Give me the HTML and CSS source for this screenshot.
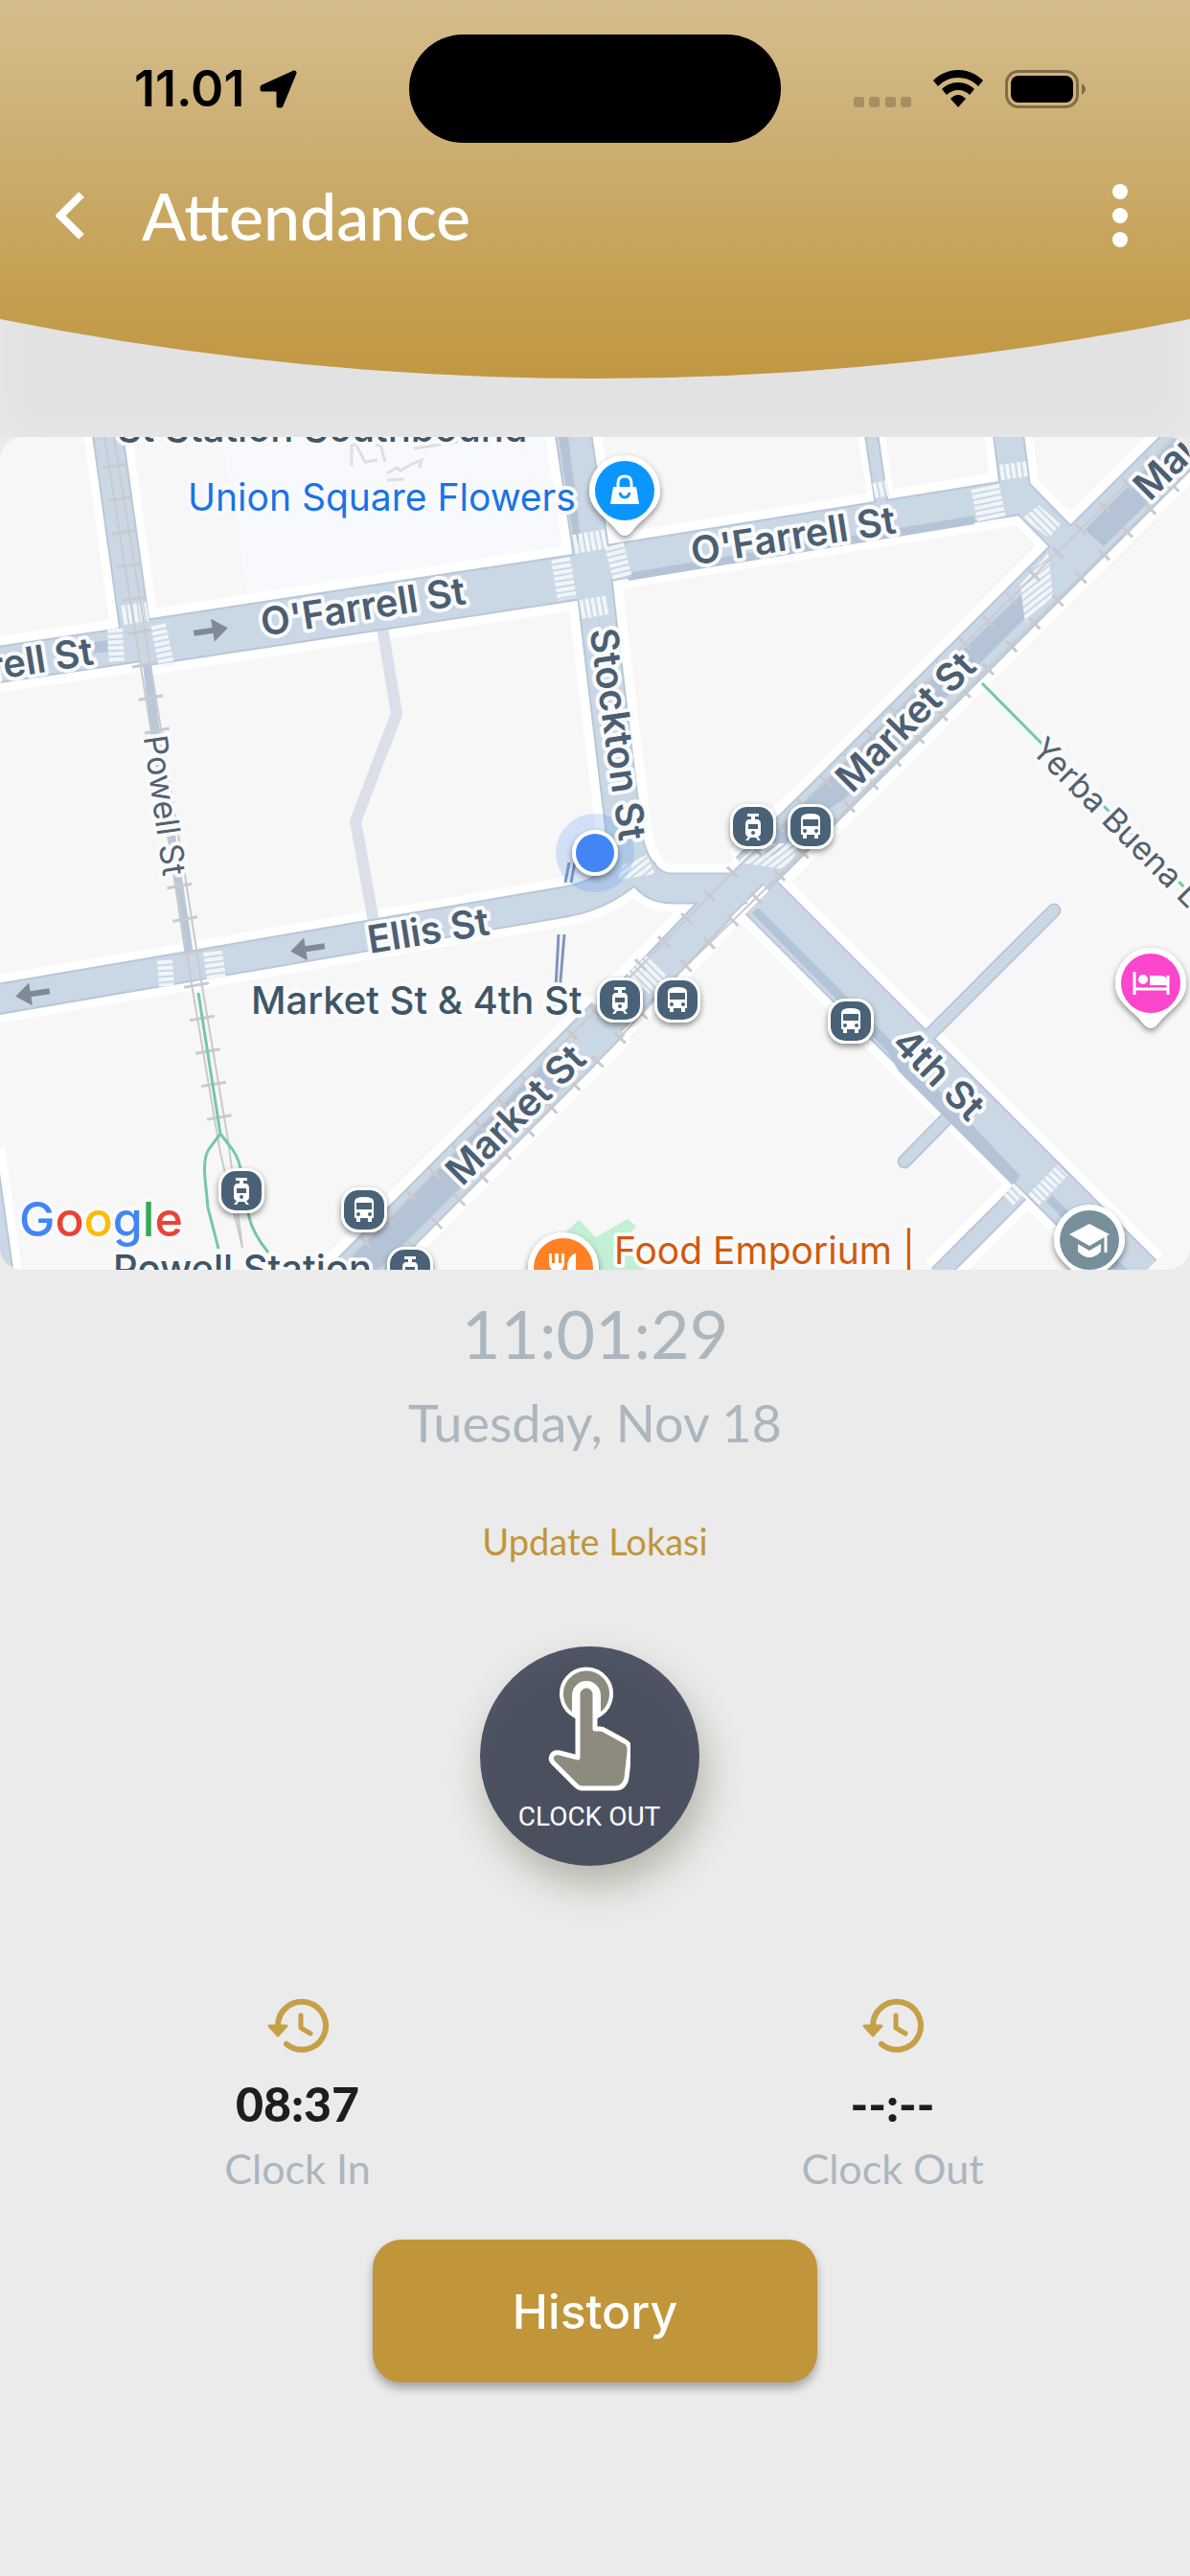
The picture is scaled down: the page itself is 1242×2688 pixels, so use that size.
FILE: index.html
```html
<!DOCTYPE html>
<html lang="en">
<head>
<meta charset="utf-8">
<meta name="viewport" content="width=device-width, initial-scale=1">
<title>Attendance</title>
<link rel="stylesheet" href="styles.css">
</head>
<body>
<div class="screen">
  <header class="header">
    <svg class="header-curve" viewBox="0 0 1242 395" preserveAspectRatio="none" aria-hidden="true">
      <defs>
        <linearGradient id="gold" x1="0" y1="0" x2="0" y2="1">
          <stop offset="0" stop-color="#d4bd8d"/>
          <stop offset=".33" stop-color="#cdb075"/>
          <stop offset=".7" stop-color="#c6a256"/>
          <stop offset="1" stop-color="#c19742"/>
        </linearGradient>
      </defs>
      <path d="M0 0H1242V333Q621 457 0 333Z" fill="url(#gold)"/>
    </svg>
    <div class="status">
      <div class="status-left">
        <span class="status-time">11.01</span>
        <svg width="40" height="40" viewBox="0 0 40 40" aria-hidden="true"><path d="M36 3 3 18V20H20V37H22Z" stroke="#000" stroke-width="5" stroke-linejoin="round"/></svg>
      </div>
      <div class="island"></div>
      <div class="status-right">
        <svg class="signal" width="60" height="11" viewBox="0 0 60 11" aria-hidden="true"><g fill="#a68f62"><rect width="11" height="11" rx="3"/><rect x="16" width="11" height="11" rx="3"/><rect x="33" width="11" height="11" rx="3"/><rect x="49" width="11" height="11" rx="3"/></g></svg>
        <svg width="52" height="39" viewBox="0 0 52 39" aria-hidden="true"><path d="M26 0C16 0 7 4 0 11L5 17C11 11 18 8 26 8S41 11 47 17L52 11C45 4 36 0 26 0ZM26 13C19 13 13 16 9 20L14 26C17 23 21 21 26 21S35 23 38 26L43 20C39 16 33 13 26 13ZM26 26C23 26 20 28 18 30L26 39 34 30C32 28 29 26 26 26Z"/></svg>
        <svg width="85" height="40" viewBox="0 0 85 40" aria-hidden="true"><rect width="77" height="40" rx="14" fill="#806d48"/><rect x="3" y="3" width="71" height="34" rx="11" fill="#d0b47e"/><rect x="6" y="6" width="65" height="28" rx="8"/><path d="M80 14Q88 20 80 26Z" fill="#806d48"/></svg>
      </div>
    </div>
    <div class="titlebar">
      <button class="icon-button" type="button" aria-label="Back"><svg width="32" height="50" viewBox="0 0 32 50"><path d="M27 3 5 25 27 47" fill="none" stroke="#fff" stroke-width="8"/></svg></button>
      <h1 class="title">Attendance</h1>
      <button class="icon-button" type="button" aria-label="More options"><svg width="18" height="68" viewBox="0 0 18 68"><g fill="#fff"><circle cx="9" cy="9" r="8"/><circle cx="9" cy="34" r="8"/><circle cx="9" cy="59" r="8"/></g></svg></button>
    </div>
  </header>

  <svg class="map" viewBox="0 456 1242 869" role="img" aria-label="Map of your location near Market St and 4th St">
    <defs>
      <g id="r48"><path d="M143 672 616 600M1270 430 1120 579 860 838 785 912M635 1063 350 1349M795 937 1190 1332"/></g>
      <g id="r38"><path d="M-5 694 143 672M613 591 1060 519M598 450 616 570 625 650 652 875Q657 900 670 915M750 945 690 1008 630 1068"/></g>
      <g id="r32"><path d="M112 450 143 672M1052 450 1060 512 1112 565M-5 1043 200 1008 590 941Q635 933 668 898M668 905Q678 927 702 927H780M-20 1200-1 1335M720 977 800 897"/></g>
      <g id="r20"><path d="M979 1330 1064 1245"/></g>
      <g id="r13"><path d="M909 450 920 525"/></g>
      <g id="alleys"><path d="M1100 950 965 1085M944 1212 1000 1155"/></g>
      <pattern id="stripes" width="6" height="6" patternUnits="userSpaceOnUse" patternTransform="rotate(-38)"><path d="M0 2H6" stroke="#f1f5fa" stroke-width="4"/></pattern>
      <pattern id="stripes-down" width="6" height="6" patternUnits="userSpaceOnUse" patternTransform="rotate(45)"><path d="M0 2H6" stroke="#f1f5fa" stroke-width="4"/></pattern>
      <g id="badge"><rect x="-24" y="-23" width="48" height="47" rx="18" fill="#fff" filter="url(#shadow)"/><rect x="-21" y="-20" width="42" height="41" rx="15" fill="#4a6277"/></g>
      <g id="tram"><use href="#badge"/><path d="M-6-13H6V-10H2V-7H5Q8-6 8-2V7Q8 10 5 11L8 15H5L3 12H-3L-5 15H-8L-5 11Q-8 10-8 7V-2Q-8-6-5-7H-2V-10H-6Z" fill="#fff"/><path d="M-5-2H5V3H-5Z" fill="#4a6277"/><circle cy="7" r="2" fill="#4a6277"/></g>
      <g id="bus"><use href="#badge"/><path d="M-10-8Q-10-13 0-13T10-8V9H8V13H4V9H-4V13H-8V9H-10Z" fill="#fff"/><path d="M-8-7H8V0H-8Z" fill="#4a6277"/><circle cx="-6" cy="5" r="2" fill="#4a6277"/><circle cx="6" cy="5" r="2" fill="#4a6277"/></g>
      <path id="pin" d="M0-37A37 37 0 0 1 37 0C37 20 19 27 6 44Q0 50-6 44C-19 27-37 20-37 0A37 37 0 0 1 0-37Z" fill="#fff" filter="url(#shadow)"/>
      <path id="arrow" d="M-18-3H2V-12L18 0 2 12V3H-18Z" fill="#7f8a96"/>
      <filter id="shadow" x="-30%" y="-30%" width="160%" height="170%"><feDropShadow dx="0" dy="3" stdDeviation="3" flood-opacity=".45"/></filter>
    </defs>

    <rect y="456" width="1242" height="869" fill="#f7f7f7"/>
    <path d="M232 456H575L592 575 260 625Z" fill="#f8f9fc"/>
    <path d="M588 1288 604 1273 622 1291 655 1272 664 1280 650 1294 674 1325H588Z" fill="#c3efd5"/>

    <g class="roads">
      <g stroke="#fff"><use href="#r48" stroke-width="68"/><use href="#r38" stroke-width="58"/><use href="#r32" stroke-width="50"/><use href="#r20" stroke-width="38"/><use href="#r13" stroke-width="28"/></g>
      <path d="M399 655 414 745 371 857 377 890 390 962" stroke="#dbdfe8" stroke-width="12"/>
      <g stroke="#b9c7d8"><use href="#r48" stroke-width="49"/><use href="#r38" stroke-width="39"/><use href="#r32" stroke-width="33"/><use href="#r20" stroke-width="20"/><use href="#r13" stroke-width="15"/><use href="#alleys" stroke-width="15" stroke-linecap="round"/><path d="M153 690 163 770 185 913 198 1000" stroke-width="9"/></g>
      <g stroke="#cad8e5"><use href="#r48" stroke-width="45"/><use href="#r38" stroke-width="35"/><use href="#r32" stroke-width="29"/><use href="#r20" stroke-width="16"/><use href="#r13" stroke-width="11"/><use href="#alleys" stroke-width="11" stroke-linecap="round"/></g>
    </g>

    <g fill="#b4c4d6">
      <path d="M1132 553 1152 570 1242 482V456H1228ZM1066 620 1069 646 880 835 838 861 808 894 790 885 850 825ZM582 1096 612 1108 395 1325H352ZM785 953 791 947 938 1094 948 1104 1065 1227 1057 1237 938 1118 926 1097ZM1092 1254 1098 1247 1177 1325H1163ZM654 598 1017 538V547L656 606ZM583 456H593L606 560 600 572ZM98 670 112 668V680L98 682Z"/>
    </g>

    <g class="crossings">
      <path d="M120 656 122 692M165 652 174 695" stroke-width="16"/>
      <path d="M128 642 154 638M599 568 633 562M606 636 635 631" stroke-width="20"/>
      <path d="M585 583 592 625M641 569 650 604" stroke-width="20"/>
      <path d="M912 512 927 509M1044 493 1073 489M172 1002 174 1029" stroke-width="16"/>
      <path d="M1028 508 1035 542" stroke-width="30"/>
      <path d="M222 993 226 1022" stroke-width="20"/>
      <path d="M1079 1252 1109 1221M1052 1252 1064 1240" stroke-width="16"/>
    </g>
    <path d="M1065 610 1094 577 1099 622 1070 650ZM770 900 790 880 838 880 819 907ZM645 918 650 903 675 892 684 912Z" fill="url(#stripes)"/>
    <path d="M653 1017 675 997 696 1017 678 1037ZM1067 541 1084 527 1107 547 1095 561Z" fill="url(#stripes-down)"/>

    <g class="rails">
      <path d="M109 456 146 690 182 913 200 1027 230 1203 253 1302M119 456 158 700 193 913 210 1023 238 1190 253 1302M1250 432 1132 548 1007 672 760 915 667 1010 590 1086 360 1318M1250 482 1074 654 860 868 712 1012 620 1112 410 1322"/>
      <path class="ties" d="M114 450 150 690 165 768"/>
      <path class="ties" d="M187 923 234 1196"/>
      <path class="ties-small" d="M1250 432 1007 672 760 915 590 1086 360 1318M1250 482 860 868 712 1012 620 1112 410 1322"/>
      <path d="M367 486 367 465 371 463 381 482 394 480M392 465 397 464 402 482M404 494 414 488 418 491 430 484 440 480 438 488M404 501 422 500M432 468 478 461" stroke="#dddfe1" stroke-width="3"/>
    </g>
    <g class="paths">
      <path d="M207 1036 230 1183 218 1199Q212 1208 214 1230L217 1260 228 1303M230 1183 243 1200Q250 1210 252 1225L259 1263Q260 1282 280 1307M1025 713 1140 829 1242 932"/>
      <path d="M583 975 579 1050M589 975 584 1035M594 900 590 921M600 900 596 921" stroke="#8094c0"/>
    </g>
    <use href="#arrow" transform="translate(220 658) rotate(-9)"/>
    <use href="#arrow" transform="translate(321 990) rotate(171)"/>
    <use href="#arrow" transform="translate(34 1037) rotate(171)"/>

    <circle cx="621" cy="890" r="41" fill="#4285f4" fill-opacity=".2"/>

    <g class="labels">
      <text class="place" x="122" y="461">St Station Southbound</text>
      <text class="shop" x="196" y="533">Union Square Flowers</text>
      <text class="street" text-anchor="middle" transform="translate(381 647) rotate(-9)">O'Farrell St</text>
      <text class="street" text-anchor="middle" transform="translate(830 573) rotate(-9)">O'Farrell St</text>
      <text class="street" text-anchor="end" transform="translate(99 693) rotate(-9)">O'Farrell St</text>
      <text class="street" text-anchor="middle" transform="translate(449 985) rotate(-9)">Ellis St</text>
      <text class="street" text-anchor="middle" transform="translate(631 768) rotate(82)">Stockton St</text>
      <text class="street" text-anchor="middle" transform="translate(955 763) rotate(-45)">Market St</text>
      <text class="street" text-anchor="middle" transform="translate(548 1173) rotate(-45)">Market St</text>
      <text class="street" transform="translate(1200 524) rotate(-45)">Market St</text>
      <text class="street" text-anchor="middle" transform="translate(970 1131) rotate(45)">4th St</text>
      <text class="lane" text-anchor="middle" transform="translate(160 842) rotate(82)">Powell St</text>
      <text class="lane" transform="translate(1075 784) rotate(45)">Yerba Buena Ln</text>
      <text class="place" x="262" y="1058">Market St &amp; 4th St</text>
      <text class="place" x="118" y="1338">Powell Station</text>
      <text class="shop food" x="641" y="1319">Food Emporium |</text>
      <text class="google" x="20" y="1290"><tspan fill="#4285f4">G</tspan><tspan fill="#ea4335">o</tspan><tspan fill="#fbbc04">o</tspan><tspan fill="#4285f4">g</tspan><tspan fill="#34a853">l</tspan><tspan fill="#ea4335">e</tspan></text>
    </g>

    <circle cx="621" cy="890" r="24" fill="#fff" filter="url(#shadow)"/>
    <circle cx="621" cy="890" r="20" fill="#4285f4"/>

    <use href="#tram" x="786" y="862"/><use href="#bus" x="846" y="862"/>
    <use href="#tram" x="647" y="1043"/><use href="#bus" x="707" y="1043"/>
    <use href="#bus" x="888" y="1065"/><use href="#tram" x="252" y="1242"/>
    <use href="#bus" x="380" y="1262"/><use href="#tram" x="428" y="1324"/>

    <g transform="translate(652 512)"><use href="#pin"/><circle r="31" fill="#0b96ff"/><path d="M-12-4H12L15 14H-15Z" fill="#fff"/><path d="M-7-3V-8Q-7-15 0-15T7-8V-3" fill="none" stroke="#fff" stroke-width="3"/><path d="M-5 2Q-4 7 0 7T5 2" fill="none" stroke="#0b96ff" stroke-width="3"/></g>
    <g transform="translate(1201 1026)"><use href="#pin"/><circle r="31" fill="#fa46cc"/><path d="M-17-12V12M-17 6H18M18-8V12" stroke="#fff" stroke-width="3" fill="none"/><circle cx="-8" cy="-4" r="5" fill="#fff"/><path d="M-1 2V-8H10Q18-8 18 0V2Z" fill="#fff"/></g>
    <g transform="translate(1137 1294)"><use href="#pin"/><circle r="31" fill="#768f9a"/><path d="M0-17 21-6 0 6-21-6Z" fill="#fff"/><path d="M-12 4 0 11 12 4V12Q6 18 0 18T-12 12Z" fill="#fff"/><path d="M17-7V13" stroke="#fff" stroke-width="3"/></g>
    <g transform="translate(588 1323)"><use href="#pin"/><circle r="31" fill="#ff8126"/><path d="M-15-15V-6Q-15 2-9 3V16H-5V3Q1 2 1-6V-15H-2V-5H-5V-15H-9V-5H-12V-15ZM12-15Q4-12 4 0V4H9V16H13V-15Z" fill="#fff"/></g>
  </svg>

  <main class="content">
    <time class="clock">11:01:29</time>
    <p class="date">Tuesday, Nov 18</p>
    <button class="update" type="button">Update Lokasi</button>
    <button class="punch" type="button">
      <svg width="86" height="132" viewBox="0 0 86 132" aria-hidden="true">
        <g fill="#8d8b7d" stroke="#fff" stroke-width="5" stroke-linejoin="round">
          <path d="M27 52A26 26 0 1 1 53 52V31A13 13 0 0 0 27 31Z" stroke-linejoin="miter" stroke-width="4"/>
          <path d="M31 96V30A9 9 0 0 1 49 30V66H54Q57 66 60 68L80 79Q86 82 85 90L82 117Q80 128 70 128H35Q32 128 28 124L5 101Q2 98 4 94 6 90 12 91Z"/>
        </g>
      </svg>
      <span>CLOCK OUT</span>
    </button>

    <dl class="stats">
      <div class="stat">
        <svg width="64" height="58" viewBox="0 0 64 58" aria-hidden="true"><g fill="none" stroke="#c5a047" stroke-linecap="round"><path d="M11 29A25 25 0 1 1 20 48" stroke-width="6"/><path d="M35 18V31L45 37" stroke-width="5" stroke-linejoin="round"/></g><path d="M2 29H20L11 39Z" fill="#c5a047" stroke="#c5a047" stroke-width="3" stroke-linejoin="round"/></svg>
        <dd>08:37</dd>
        <dt>Clock In</dt>
      </div>
      <div class="stat">
        <svg width="64" height="58" viewBox="0 0 64 58" aria-hidden="true"><g fill="none" stroke="#c5a047" stroke-linecap="round"><path d="M11 29A25 25 0 1 1 20 48" stroke-width="6"/><path d="M35 18V31L45 37" stroke-width="5" stroke-linejoin="round"/></g><path d="M2 29H20L11 39Z" fill="#c5a047" stroke="#c5a047" stroke-width="3" stroke-linejoin="round"/></svg>
        <dd>--:--</dd>
        <dt>Clock Out</dt>
      </div>
    </dl>

    <button class="history" type="button">History</button>
  </main>
</div>
</body>
</html>
```
FILE: styles.css
```css
* { box-sizing: border-box; }

body {
  margin: 0;
  background: #ebebeb;
  font-family: Lato, "Open Sans", sans-serif;
}

button {
  padding: 0;
  border: 0;
  background: none;
  font: inherit;
  cursor: pointer;
}

svg { display: block; }

.screen {
  display: flex;
  flex-direction: column;
  min-height: 100vh;
}

/* Header */
.header {
  position: relative;
  min-height: 456px;
  padding-top: 36px;
  background: #e2e2e2;
  box-shadow: inset 0 0 36px #e9e9e9;
}

.header-curve {
  position: absolute;
  inset: 0 0 auto;
  width: 100%;
  height: 395px;
}

.status,
.titlebar {
  position: relative;
  display: grid;
  align-items: center;
}

.status { grid-template-columns: 1fr 388px 1fr; }

.island {
  height: 113px;
  border-radius: 57px;
  background: #000;
}

.status-left,
.status-right {
  display: flex;
  align-items: center;
}

.status-left {
  gap: 16px;
  padding-left: 140px;
}

.status-time {
  font: 600 52px/60px Inter, sans-serif;
}

.status-right {
  justify-content: flex-end;
  gap: 23px;
  padding-right: 108px;
}

.signal { margin-top: 28px; }

.titlebar {
  grid-template-columns: 32px 1fr auto;
  gap: 58px;
  height: 152px;
  padding: 0 64px 0 58px;
}

.title {
  margin: 0;
  color: #fff;
  font-size: 68px;
  font-weight: 500;
  line-height: 80px;
}

/* Map */
.map {
  width: 100%;
  border-radius: 24px;
}

.roads,
.crossings,
.rails,
.paths { fill: none; }

.crossings {
  stroke: #f1f5fa;
  stroke-dasharray: 4 2;
}

.rails {
  stroke: #c9cace;
  stroke-width: 2;
}

.ties {
  stroke-width: 26;
  stroke-dasharray: 3 32;
}

.ties-small {
  stroke-width: 16;
  stroke-dasharray: 3 31;
}

.paths {
  stroke: #76c7a6;
  stroke-width: 3;
}

.labels {
  font-family: Inter, sans-serif;
  font-size: 40px;
  paint-order: stroke;
  stroke: #f9fafc;
  stroke-width: 8px;
  stroke-linejoin: round;
}

.street {
  fill: #4c5f72;
  font-weight: 600;
}

.lane {
  fill: #53616f;
  font-size: 34px;
}

.place {
  fill: #3f5668;
  font-weight: 500;
}

.shop {
  fill: #1a73e8;
  font-size: 39px;
}

.food { fill: #d4590a; }

.google {
  font-size: 50px;
  font-weight: 500;
}

/* Clock */
.content {
  display: flex;
  flex-direction: column;
  align-items: center;
  padding: 26px 0 64px;
}

.clock,
.date,
.stat dt { color: #abb6bf; }

.clock {
  font-size: 70px;
  line-height: 80px;
}

.date {
  margin: 18px 0 0;
  font-size: 54px;
  line-height: 72px;
}

.update {
  margin-top: 63px;
  color: #c19539;
  font-size: 38px;
  line-height: 48px;
}

.punch {
  display: flex;
  flex-direction: column;
  align-items: center;
  width: 229px;
  height: 229px;
  margin: 86px 12px 0 0;
  padding-top: 20px;
  border-radius: 50%;
  background: radial-gradient(circle at 50% 60%, #4b505f 0 55%, #555c6d 100%);
  box-shadow: 6px 20px 40px #b3b4a8;
  color: #fff;
  font: 400 28px/32px Roboto, sans-serif;
}

.punch span { margin-top: 10px; }

.stats {
  display: grid;
  grid-template-columns: 1fr 1fr;
  width: 100%;
  margin: 138px 0 0;
}

.stat {
  display: flex;
  flex-direction: column;
  align-items: center;
}

.stat dd {
  margin: 20px 0 0;
  color: #1e1e1e;
  font-size: 50px;
  font-weight: 900;
  line-height: 64px;
}

.stat dt {
  margin-top: 10px;
  font-size: 43px;
  line-height: 52px;
}

.history {
  width: 464px;
  height: 149px;
  margin-top: 48px;
  border-radius: 30px;
  background: #c19539;
  box-shadow: 0 6px 10px rgba(0, 0, 0, .3);
  color: #fff;
  font: 500 50px/60px Inter, sans-serif;
}
```
